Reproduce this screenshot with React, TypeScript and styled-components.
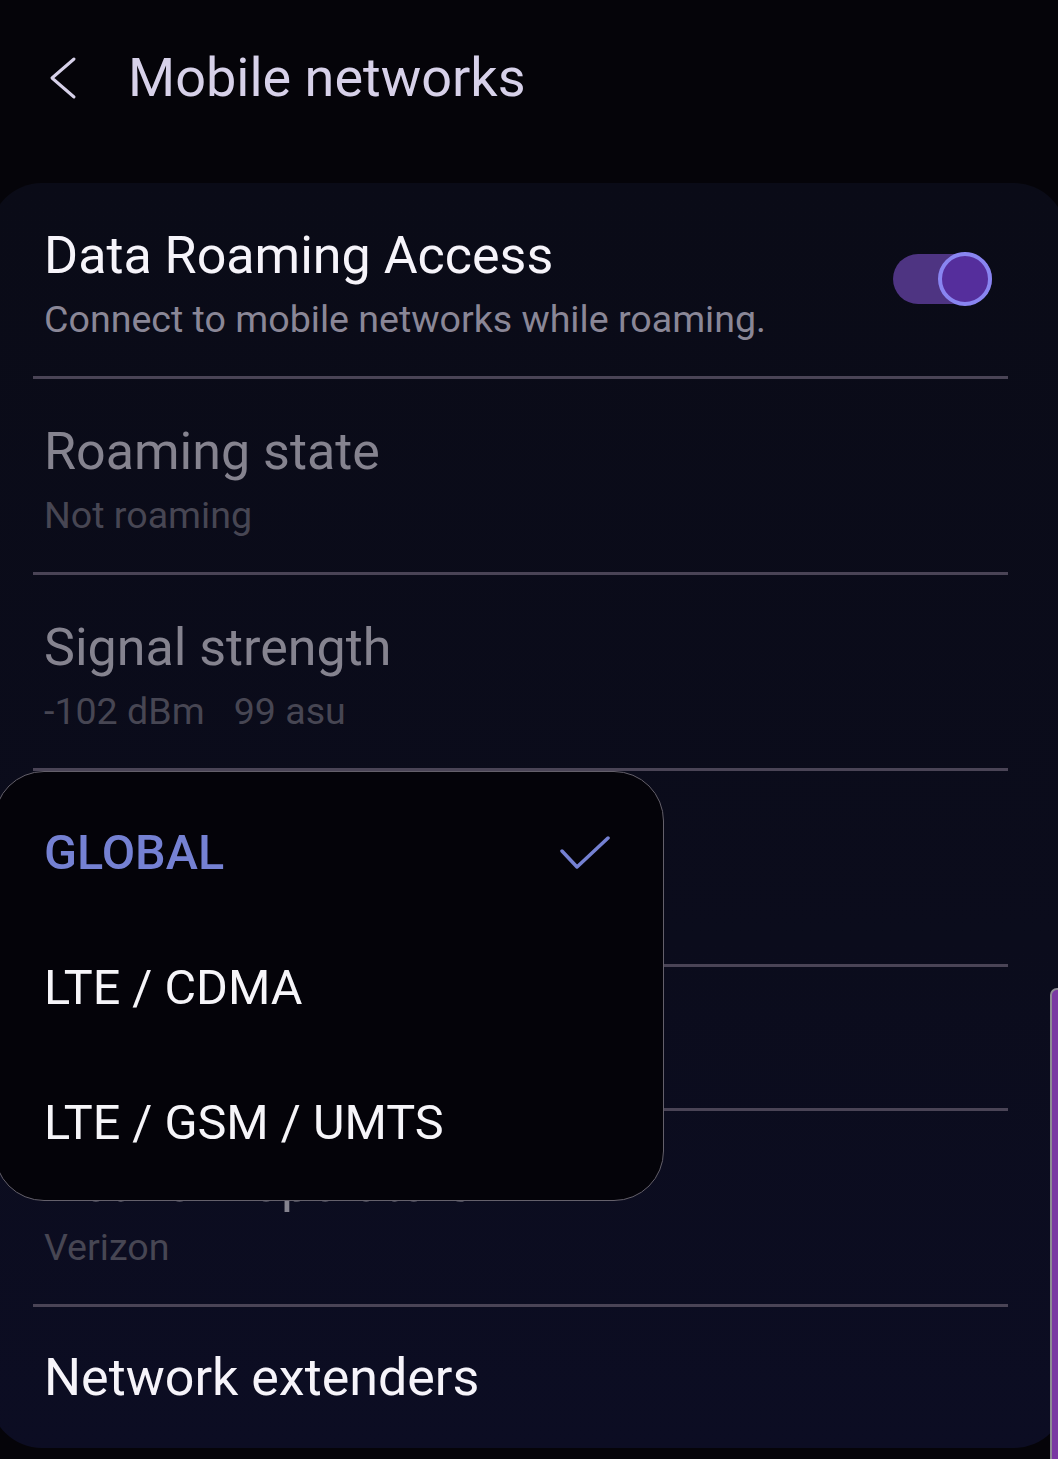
import React from "react";
import styled, { createGlobalStyle } from "styled-components";

const GlobalStyle = createGlobalStyle`
  html, body {
    margin: 0;
    padding: 0;
    background: #050409;
  }
  body {
    font-family: Roboto, "Noto Sans", "Liberation Sans", sans-serif;
    -webkit-font-smoothing: antialiased;
  }
  * { box-sizing: border-box; }
`;

const Screen = styled.div`
  position: relative;
  width: 1058px;
  height: 1459px;
  overflow: hidden;
  background: #050409;
`;

const Header = styled.header`
  display: flex;
  align-items: center;
  height: 156px;
  padding-left: 48px;
`;

const BackIcon = styled.svg`
  width: 30px;
  height: 44px;
  flex: none;
`;

const HeaderTitle = styled.h1`
  margin: 0 0 0 50px;
  font-size: 54px;
  line-height: 64px;
  font-weight: 400;
  color: #d7d1e9;
  letter-spacing: 0;
`;

const Card = styled.section`
  margin: 27px 0 0 -10px;
  width: 1076px;
  border-radius: 52px;
  background: linear-gradient(180deg, #0a0b17 0%, #0b0c1c 60%, #0c0d23 100%);
  padding: 0 58px 0 43px;
  display: flex;
  flex-direction: column;
`;

const Row = styled.div<{ $single?: boolean; $occluded?: boolean }>`
  display: flex;
  align-items: center;
  justify-content: space-between;
  padding: ${(p) => (p.$single ? "41px 16px 40px 11px" : "43px 16px 34px 11px")};
  border-bottom: 3px solid #4a4456;
  & > * {
    visibility: ${(p) => (p.$occluded ? "hidden" : "visible")};
  }
  &:last-child {
    border-bottom: none;
  }
`;

const TextBlock = styled.div`
  display: flex;
  flex-direction: column;
  gap: 10px;
  min-width: 0;
`;

const Title = styled.div<{ $dim?: boolean }>`
  font-size: 52px;
  line-height: 60px;
  font-weight: 400;
  color: ${(p) => (p.$dim ? "#85838f" : "#f6f4fa")};
  white-space: nowrap;
`;

const Subtitle = styled.div<{ $dim?: boolean }>`
  font-size: 37.6px;
  line-height: 46px;
  color: ${(p) => (p.$dim ? "#474653" : "#8a8797")};
  white-space: nowrap;
  display: flex;
  gap: 29px;
`;

const Switch = styled.div`
  display: flex;
  justify-content: flex-end;
  align-items: center;
  width: 99px;
  height: 50px;
  margin-bottom: 10px;
  border-radius: 25px;
  background: #4e3482;
`;

const Thumb = styled.div`
  width: 54px;
  height: 54px;
  margin: -2px 0;
  border-radius: 50%;
  border: 4px solid #8985f1;
  background: #552e9c;
`;

const Menu = styled.div`
  position: absolute;
  left: -6px;
  top: 771px;
  width: 670px;
  height: 430px;
  border-radius: 50px;
  border: 1.5px solid #64606b;
  background: #040309;
  padding: 13px 0 9px;
  display: flex;
  flex-direction: column;
`;

const MenuItem = styled.div<{ $selected?: boolean }>`
  height: 135px;
  display: flex;
  align-items: center;
  justify-content: space-between;
  padding: 0 53px 0 49px;
  font-size: ${(p) => (p.$selected ? "48.5px" : "48.6px")};
  line-height: 56px;
  font-weight: ${(p) => (p.$selected ? 500 : 400)};
  color: ${(p) => (p.$selected ? "#7581d3" : "#f6f5f9")};
  white-space: nowrap;
`;

const CheckIcon = styled.svg`
  width: 50px;
  height: 36px;
  flex: none;
`;

const ScrollThumb = styled.div`
  position: absolute;
  right: -6px;
  top: 988px;
  width: 14px;
  height: 520px;
  border-radius: 7px;
  border: 2px solid #8d8a94;
  background: #7a39a3;
`;

export default function App() {
  return (
    <Screen>
      <GlobalStyle />
      <Header>
        <BackIcon viewBox="0 0 30 44" fill="none">
          <polyline
            points="26,3 4,22 26,41"
            stroke="#d7d1e9"
            strokeWidth="3"
            strokeLinecap="round"
            strokeLinejoin="round"
          />
        </BackIcon>
        <HeaderTitle>Mobile networks</HeaderTitle>
      </Header>

      <Card>
        <Row>
          <TextBlock>
            <Title>Data Roaming Access</Title>
            <Subtitle>Connect to mobile networks while roaming.</Subtitle>
          </TextBlock>
          <Switch>
            <Thumb />
          </Switch>
        </Row>
        <Row>
          <TextBlock>
            <Title $dim>Roaming state</Title>
            <Subtitle $dim>Not roaming</Subtitle>
          </TextBlock>
        </Row>
        <Row>
          <TextBlock>
            <Title $dim>Signal strength</Title>
            <Subtitle $dim>
              <span>-102 dBm</span>
              <span>99 asu</span>
            </Subtitle>
          </TextBlock>
        </Row>
        <Row $occluded>
          <TextBlock>
            <Title>Network mode</Title>
            <Subtitle>Global</Subtitle>
          </TextBlock>
        </Row>
        <Row $single $occluded>
          <Title>Access Point Names</Title>
        </Row>
        <Row>
          <TextBlock>
            <Title $dim>Network operators</Title>
            <Subtitle $dim>Verizon</Subtitle>
          </TextBlock>
        </Row>
        <Row $single>
          <Title>Network extenders</Title>
        </Row>
      </Card>

      <Menu>
        <MenuItem $selected>
          <span>GLOBAL</span>
          <CheckIcon viewBox="0 0 50 36" fill="none">
            <polyline
              points="2,16 17,32 48,3"
              stroke="#7581d3"
              strokeWidth="3.5"
              strokeLinecap="round"
              strokeLinejoin="round"
            />
          </CheckIcon>
        </MenuItem>
        <MenuItem>LTE / CDMA</MenuItem>
        <MenuItem>LTE / GSM / UMTS</MenuItem>
      </Menu>

      <ScrollThumb />
    </Screen>
  );
}
